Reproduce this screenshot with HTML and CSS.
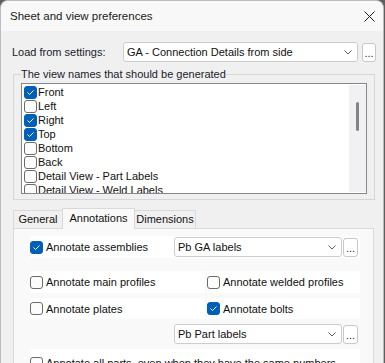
FILE: index.html
```html
<!DOCTYPE html>
<html lang="en">
<head>
  <meta charset="UTF-8" />
  <title>Sheet and view preferences</title>
  <link rel="stylesheet" href="styles.css">
</head>
<body>

  <div class="window">
    <div class="titlebar">
      <span class="title">Sheet and view preferences</span>
      <svg class="close" width="11" height="11" viewBox="0 0 11 11">
        <path d="M0.5 0.5 L10.5 10.5 M10.5 0.5 L0.5 10.5" stroke="#1c1c1c" stroke-width="1" fill="none"/>
      </svg>
    </div>

    <div class="load-row">
      <span class="load-label">Load from settings:</span>
      <div class="combo combo-wide">
        <span>GA - Connection Details from side</span>
        <svg class="chev" width="8" height="5" viewBox="0 0 8 5"><path d="M0.5 0.5 L4 4 L7.5 0.5" stroke="#5f5f5f" fill="none"/></svg>
      </div>
      <span class="dots">...</span>
    </div>

    <fieldset class="views">
      <legend>The view names that should be generated</legend>
      <div class="listbox">
        <div class="items">
          <div class="item"><span class="cb on"><svg width="11" height="11" viewBox="0 0 11 11"><path d="M2.5 5.5 L4.5 7.5 L8.5 3.5" stroke="#fff" fill="none"/></svg></span>Front</div>
          <div class="item"><span class="cb"></span>Left</div>
          <div class="item"><span class="cb on"><svg width="11" height="11" viewBox="0 0 11 11"><path d="M2.5 5.5 L4.5 7.5 L8.5 3.5" stroke="#fff" fill="none"/></svg></span>Right</div>
          <div class="item"><span class="cb on"><svg width="11" height="11" viewBox="0 0 11 11"><path d="M2.5 5.5 L4.5 7.5 L8.5 3.5" stroke="#fff" fill="none"/></svg></span>Top</div>
          <div class="item"><span class="cb"></span>Bottom</div>
          <div class="item"><span class="cb"></span>Back</div>
          <div class="item"><span class="cb"></span>Detail View - Part Labels</div>
          <div class="item"><span class="cb"></span>Detail View - Weld Labels</div>
        </div>
        <div class="scroll"><div class="thumb"></div></div>
      </div>
    </fieldset>

    <div class="tabs">
      <span class="tab tab-general">General</span>
      <span class="tab tab-annot active">Annotations</span>
      <span class="tab tab-dim">Dimensions</span>
    </div>

    <div class="panel">
      <div class="row strip row-first">
        <label class="check check-fixed"><span class="cb on"><svg width="11" height="11" viewBox="0 0 11 11"><path d="M2.5 5.5 L4.5 7.5 L8.5 3.5" stroke="#fff" fill="none"/></svg></span>Annotate assemblies</label>
        <div class="combo combo-small">
          <span>Pb GA labels</span>
          <svg class="chev" width="8" height="5" viewBox="0 0 8 5"><path d="M0.5 0.5 L4 4 L7.5 0.5" stroke="#5f5f5f" fill="none"/></svg>
        </div>
        <span class="dots dots-small">...</span>
      </div>

      <div class="row pair row-second">
        <label class="check cell-left"><span class="cb"></span>Annotate main profiles</label>
        <label class="check cell-right"><span class="cb"></span>Annotate welded profiles</label>
      </div>

      <div class="row pair row-third">
        <label class="check cell-left"><span class="cb"></span>Annotate plates</label>
        <label class="check cell-right"><span class="cb on"><svg width="11" height="11" viewBox="0 0 11 11"><path d="M2.5 5.5 L4.5 7.5 L8.5 3.5" stroke="#fff" fill="none"/></svg></span>Annotate bolts</label>
      </div>

      <div class="row row-combo">
        <div class="combo combo-small">
          <span>Pb Part labels</span>
          <svg class="chev" width="8" height="5" viewBox="0 0 8 5"><path d="M0.5 0.5 L4 4 L7.5 0.5" stroke="#5f5f5f" fill="none"/></svg>
        </div>
        <span class="dots dots-small">...</span>
      </div>

      <div class="row strip row-last">
        <label class="check"><span class="cb"></span>Annotate all parts, even when they have the same numbers</label>
      </div>
    </div>
  </div>

</body>
</html>
```

FILE: styles.css
```css
body {
  margin: 0;
  background: #5e5e5e;
  font-family: 'Liberation Sans', Arial, sans-serif;
  font-size: 11px;
  color: #111;
}

.window {
  box-sizing: border-box;
  width: 384px;
  height: 363px;
  background: #f0f0f0;
  border: 1px solid #bdbdbd;
  border-bottom: none;
  border-radius: 8px 8px 0 0;
  overflow: hidden;
}

.titlebar {
  height: 30px;
  display: flex;
  align-items: center;
  justify-content: space-between;
  padding: 0 8px 0 9px;
  background: #f8f8f8;
}

.title {
  font-size: 11.5px;
  color: #1a1a1a;
}

/* load from settings */

.load-row {
  display: flex;
  align-items: center;
  height: 20px;
  margin-top: 11px;
  padding-left: 11px;
}

.load-label {
  width: 111px;
  color: #1b1b2b;
}

.combo {
  box-sizing: border-box;
  height: 20px;
  display: flex;
  align-items: center;
  justify-content: space-between;
  padding: 0 5px 0 3px;
  background: #fff;
  border: 1px solid #cdcdcd;
  border-radius: 3px;
  white-space: nowrap;
}

.combo-wide {
  width: 235px;
}

.chev {
  flex: none;
}

.dots {
  box-sizing: border-box;
  width: 14px;
  height: 19px;
  margin-left: 4px;
  display: flex;
  align-items: center;
  justify-content: center;
  background: #fff;
  border: 1px solid #c8c8c8;
  border-radius: 3px;
  color: #16206e;
  line-height: 1;
  padding-top: 3px;
}

/* view names group */

.views {
  box-sizing: border-box;
  width: 362px;
  min-width: 0;
  margin: 5px 0 0 12px;
  padding: 0 7px 5px;
  border: 1px solid #d6d6d6;
}

.views legend {
  padding: 0;
  line-height: 14px;
  color: #1b1b2b;
}

.listbox {
  box-sizing: border-box;
  height: 111px;
  margin-top: 2px;
  display: flex;
  background: #fff;
  border: 1px solid #828790;
  overflow: hidden;
}

.items {
  flex: 1;
  padding: 1px 0 0 2px;
}

.item {
  height: 14px;
  display: flex;
  align-items: center;
  gap: 1px;
  line-height: 14px;
  white-space: nowrap;
}

.scroll {
  width: 17px;
  margin: 1px 0;
  display: flex;
  justify-content: center;
  background: #f1f1f1;
}

.thumb {
  width: 3px;
  height: 29px;
  margin-top: 17px;
  border-radius: 2px;
  background: #858585;
}

/* checkboxes */

.cb {
  box-sizing: border-box;
  flex: none;
  width: 13px;
  height: 13px;
  display: flex;
  align-items: center;
  justify-content: center;
  background: #fcfcfc;
  border: 1px solid #6b6b6b;
  border-radius: 3px;
}

.cb.on {
  background: #005fb8;
  border-color: #005fb8;
}

.check {
  display: flex;
  align-items: center;
  gap: 3px;
  white-space: nowrap;
}

/* tabs */

.tabs {
  display: flex;
  align-items: flex-end;
  height: 20px;
  margin: 8px 0 0 12px;
}

.tab {
  box-sizing: border-box;
  height: 18px;
  line-height: 17px;
  text-align: center;
  background: #f0f0f0;
  border: 1px solid #d9d9d9;
  border-bottom: none;
  white-space: nowrap;
}

.tab-general {
  width: 50px;
}

.tab-annot {
  width: 73px;
  margin-left: -1px;
}

.tab-dim {
  width: 62px;
  margin-left: -1px;
}

.tab.active {
  position: relative;
  z-index: 1;
  height: 21px;
  margin-bottom: -1px;
  line-height: 19px;
  background: #f9f9f9;
}

.panel {
  box-sizing: border-box;
  width: 361px;
  height: 140px;
  margin-left: 12px;
  padding: 7px 0 0 16px;
  background: #f9f9f9;
  border: 1px solid #d9d9d9;
}

.row {
  display: flex;
  width: 330px;
}

.strip {
  background: #fff;
}

.row-first {
  height: 22px;
  align-items: center;
}

.check-fixed {
  width: 144px;
}

.combo-small {
  width: 168px;
}

.dots-small {
  width: 15px;
  margin-left: 1px;
}

.pair {
  gap: 2px;
}

.pair .check {
  background: #fff;
}

.cell-left {
  width: 175px;
}

.cell-right {
  width: 153px;
}

.row-second {
  height: 22px;
  margin-top: 13px;
}

.row-third {
  height: 21px;
  margin-top: 5px;
}

.row-combo {
  height: 20px;
  margin-top: 5px;
  padding-left: 144px;
  box-sizing: border-box;
  align-items: center;
}

.row-last {
  height: 30px;
  margin-top: 5px;
  padding-top: 8px;
  box-sizing: border-box;
  align-items: flex-start;
}

.row-last .check {
  line-height: 13px;
}
```
